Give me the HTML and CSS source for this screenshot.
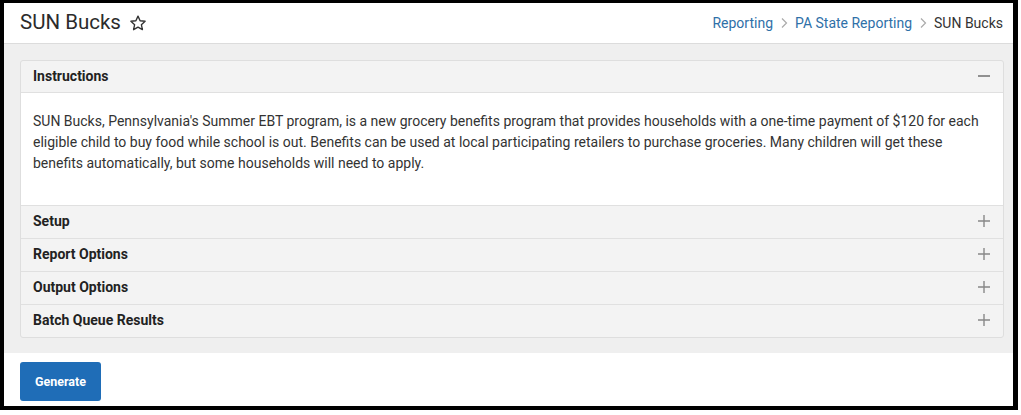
FILE: index.html
```html
<!DOCTYPE html>
<html>
<head>
<meta charset="utf-8">
<link rel="stylesheet" href="styles.css">
</head>
<body>
<div class="frame">
  <header class="topbar">
    <div class="title-wrap">
      <h1 class="title">SUN Bucks</h1>
      <svg class="star" width="18" height="18" viewBox="0 0 24 24"><path d="M12 2.8l2.8 6.2 6.7.7-5 4.6 1.4 6.6L12 17.5l-5.9 3.4 1.4-6.6-5-4.6 6.7-.7z" fill="none" stroke="#333" stroke-width="1.8" stroke-linejoin="round"/></svg>
    </div>
    <nav class="crumbs">
      <a class="crumb-link">Reporting</a>
      <svg class="chev" width="8" height="12" viewBox="0 0 8 12"><path d="M2 1.5l4.5 4.5L2 10.5" fill="none" stroke="#aaa" stroke-width="1.2"/></svg>
      <a class="crumb-link">PA State Reporting</a>
      <svg class="chev" width="8" height="12" viewBox="0 0 8 12"><path d="M2 1.5l4.5 4.5L2 10.5" fill="none" stroke="#aaa" stroke-width="1.2"/></svg>
      <span class="crumb-current">SUN Bucks</span>
    </nav>
  </header>
  <main class="content">
    <section class="panel">
      <div class="row row-open">
        <span class="row-label">Instructions</span>
        <svg class="toggle" width="12" height="12" viewBox="0 0 12 12"><path d="M0 6h12" stroke="#777" stroke-width="1.6"/></svg>
      </div>
      <div class="body">
        <p>SUN Bucks, Pennsylvania's Summer EBT program, is a new grocery benefits program that provides households with a one-time payment of $120 for each eligible child to buy food while school is out. Benefits can be used at local participating retailers to purchase groceries. Many children will get these benefits automatically, but some households will need to apply.</p>
      </div>
      <div class="row">
        <span class="row-label">Setup</span>
        <svg class="toggle" width="12" height="12" viewBox="0 0 12 12"><path d="M0 6h12M6 0v12" stroke="#888" stroke-width="1.4"/></svg>
      </div>
      <div class="row">
        <span class="row-label">Report Options</span>
        <svg class="toggle" width="12" height="12" viewBox="0 0 12 12"><path d="M0 6h12M6 0v12" stroke="#888" stroke-width="1.4"/></svg>
      </div>
      <div class="row">
        <span class="row-label">Output Options</span>
        <svg class="toggle" width="12" height="12" viewBox="0 0 12 12"><path d="M0 6h12M6 0v12" stroke="#888" stroke-width="1.4"/></svg>
      </div>
      <div class="row row-last">
        <span class="row-label">Batch Queue Results</span>
        <svg class="toggle" width="12" height="12" viewBox="0 0 12 12"><path d="M0 6h12M6 0v12" stroke="#888" stroke-width="1.4"/></svg>
      </div>
    </section>
  </main>
  <footer class="footer">
    <button class="btn">Generate</button>
  </footer>
</div>
</body>
</html>
```
FILE: styles.css
```css
* { box-sizing: border-box; }
html, body { margin: 0; padding: 0; background: #fff; }
body { font-family: Roboto, "Liberation Sans", sans-serif; color: #333; }

.frame {
  width: 1018px;
  height: 410px;
  border-style: solid;
  border-color: #000;
  border-width: 3px 5px 4px 4px;
  display: flex;
  flex-direction: column;
  background: #fff;
}

.topbar {
  height: 41px;
  flex: none;
  display: flex;
  align-items: center;
  justify-content: space-between;
  padding: 0 10px 0 16px;
  border-bottom: 1px solid #dcdcdc;
  background: #fff;
}
.title-wrap { display: flex; align-items: center; gap: 8px; }
.title {
  margin: 0;
  font-size: 20.5px;
  font-weight: 400;
  color: #2b2b2b;
  line-height: 1;
  position: relative;
  top: -1px;
}
.star { margin-top: -1px; }

.crumbs { display: flex; align-items: center; gap: 7px; font-size: 14px; margin-top: 0; }
.crumb-link { color: #2f70a8; text-decoration: none; }
.crumb-current { color: #333; }
.chev { margin: 0; }

.content {
  background: #efefef;
  padding: 16px 9px 15px 16px;
  flex: none;
}
.panel {
  border: 1px solid #dedede;
  border-radius: 3px;
  background: #f3f3f3;
}
.row {
  height: 33px;
  display: flex;
  align-items: center;
  justify-content: space-between;
  padding: 0 13px 2px 12px;
  border-top: 1px solid #e0e0e0;
}
.row-open { border-top: none; height: 32px; border-bottom: 1px solid #e0e0e0; }
.row-label { font-size: 14px; font-weight: 700; color: #222; }
.toggle { flex: none; }

.body {
  background: #fff;
  padding: 18px 12px 22px 12px;
  height: 112px;
}
.body p {
  margin: 0;
  font-size: 14px;
  line-height: 21px;
  color: #333;
}

.footer {
  flex: 1;
  background: #fff;
  padding: 9px 16px 0;
}
.btn {
  width: 81px;
  height: 39px;
  background: #1f6db7;
  color: #fff;
  border: none;
  border-radius: 3px;
  font-family: Roboto, "Liberation Sans", sans-serif;
  font-size: 12.5px;
  font-weight: 700;
  padding: 0;
}
```
